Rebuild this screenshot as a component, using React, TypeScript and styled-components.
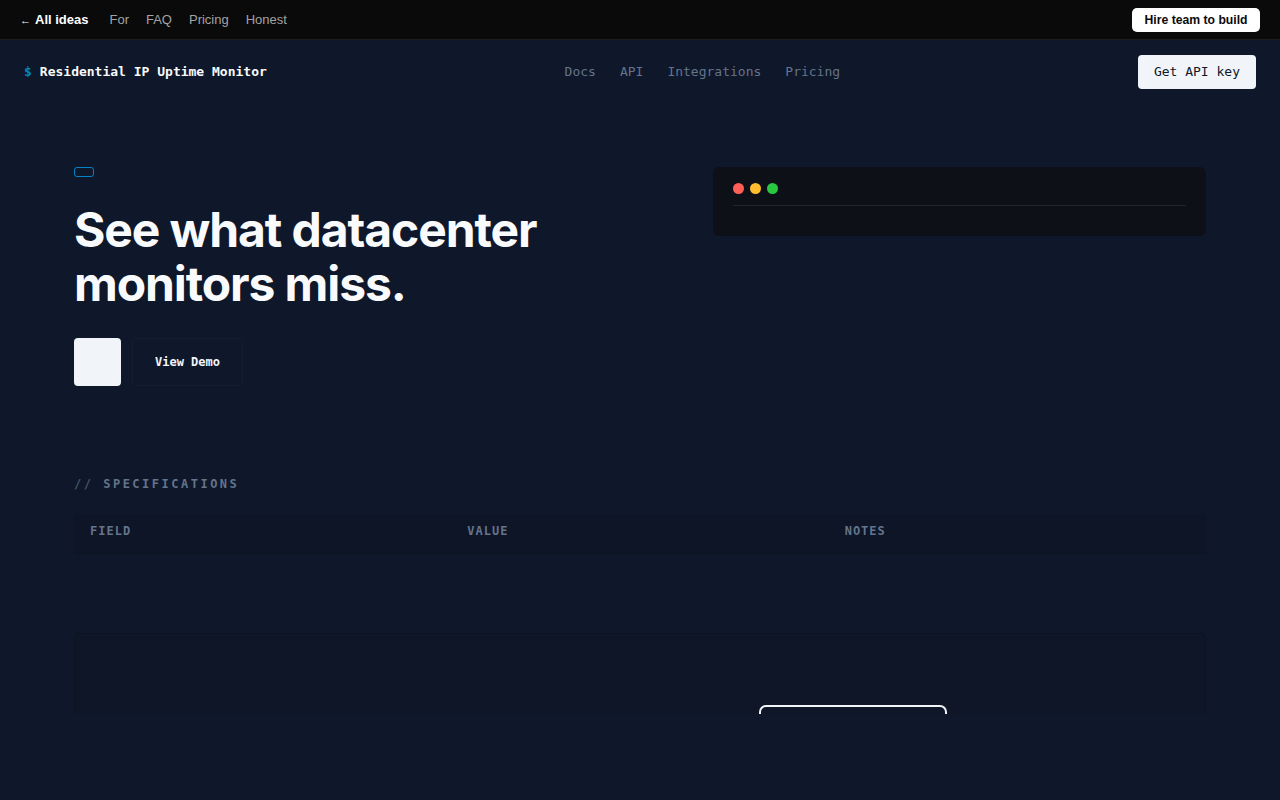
import styled, { createGlobalStyle } from 'styled-components'

const GlobalStyle = createGlobalStyle`
  html, body {
    margin: 0;
    padding: 0;
    background: #0f172a;
  }
  * {
    box-sizing: border-box;
  }
`;

const mono = `"DejaVu Sans Mono", "Liberation Mono", monospace`;

const TopBar = styled.div`
  height: 40px;
  background: #0a0a0a;
  border-bottom: 1px solid #1c1c1c;
  display: flex;
  align-items: center;
  justify-content: space-between;
  padding: 0 20px;
  font-family: "Liberation Sans", Arial, sans-serif;
  font-size: 13px;
`;
const TopLinks = styled.div`
  display: flex;
  align-items: center;
  gap: 17px;
`;
const BackLink = styled.a`
  color: #ffffff;
  font-weight: 700;
  text-decoration: none;
  margin-right: 4px;
  span {
    font-size: 11px;
    margin-right: 4px;
  }
`;
const TopLink = styled.a`
  color: #a3a3a3;
  text-decoration: none;
`;
const HireButton = styled.button`
  height: 24px;
  padding: 0 12.5px;
  border: none;
  border-radius: 5px;
  background: #ffffff;
  color: #0a0a0a;
  font-family: "Liberation Sans", Arial, sans-serif;
  font-weight: 700;
  font-size: 12.2px;
`;

const Header = styled.header`
  height: 63px;
  display: flex;
  align-items: center;
  justify-content: space-between;
  padding: 0 24px;
  font-family: ${mono};
  font-size: 13px;
`;
const Brand = styled.div`
  color: #f8fafc;
  font-weight: 700;
  span {
    color: #0284c7;
    margin-right: 8px;
  }
`;
const Nav = styled.nav`
  display: flex;
  gap: 24px;
`;
const NavLink = styled.a`
  color: #64748b;
  text-decoration: none;
`;
const KeyButton = styled.button`
  height: 34px;
  padding: 0 16px;
  border: none;
  border-radius: 4px;
  background: #f1f5f9;
  color: #0f172a;
  font-family: ${mono};
  font-size: 13px;
`;

const Container = styled.main`
  width: 1132px;
  margin: 0 auto;
`;

const Hero = styled.section`
  display: grid;
  grid-template-columns: 591px 493px;
  gap: 48px;
  padding-top: 64px;
  align-items: start;
`;
const Badge = styled.span`
  display: block;
  width: 20px;
  height: 10px;
  border: 1px solid #0284c7;
  border-radius: 3px;
`;
const Title = styled.h1`
  margin: 26px 0 0;
  font-family: Inter, "Liberation Sans", sans-serif;
  font-weight: 700;
  font-size: 48px;
  line-height: 54px;
  letter-spacing: -1.1px;
  color: #f8fafc;
  max-width: 500px;
`;
const Actions = styled.div`
  display: flex;
  gap: 11px;
  margin-top: 27px;
`;
const PrimaryButton = styled.button`
  width: 47px;
  height: 48px;
  border: none;
  border-radius: 4px;
  background: #f1f5f9;
`;
const GhostButton = styled.button`
  height: 48px;
  padding: 0 22px;
  border: 1px solid #141d31;
  border-radius: 4px;
  background: transparent;
  color: #f1f5f9;
  font-family: ${mono};
  font-weight: 700;
  font-size: 12px;
`;

const Terminal = styled.div`
  background: #0d1117;
  border-radius: 6px;
  padding: 16px 20px;
`;
const TerminalBar = styled.div`
  display: flex;
  gap: 6px;
  padding-bottom: 11px;
  border-bottom: 1px solid #21262d;
`;
const Dot = styled.span<{ $color: string }>`
  width: 11px;
  height: 11px;
  border-radius: 50%;
  background: ${p => p.$color};
`;
const TerminalBody = styled.div`
  height: 14px;
`;

const Specs = styled.section`
  margin-top: 90px;
`;
const SectionLabel = styled.h2`
  margin: 0;
  font-family: ${mono};
  font-size: 12px;
  font-weight: 700;
  letter-spacing: 2.5px;
  color: #64748b;
  line-height: 16px;
  span {
    color: #475569;
  }
`;
const TableClip = styled.div`
  margin-top: 22px;
  height: 200px;
  overflow: hidden;
`;
const TableHead = styled.div`
  display: grid;
  grid-template-columns: repeat(3, 1fr);
  height: 40px;
  padding-bottom: 6px;
  align-items: center;
  background: #0e1527;
  border-bottom: 1px solid #0c1322;
`;
const HeadCell = styled.div`
  padding: 0 16px;
  font-family: ${mono};
  font-weight: 700;
  font-size: 12px;
  letter-spacing: 1px;
  color: #64748b;
`;
const TableBody = styled.div`
  height: 79px;
`;
const Panel = styled.div`
  height: 120px;
  background: #0f1627;
  border: 1px solid #0c1322;
  border-radius: 6px;
  padding: 71px 0 0 684px;
`;
const OutlineBox = styled.div`
  width: 188px;
  height: 44px;
  border: 2px solid #f1f5f9;
  border-radius: 7px;
`;

const App = () => {
  return (
    <>
      <GlobalStyle />
      <TopBar>
        <TopLinks>
          <BackLink href="#"><span>←</span>All ideas</BackLink>
          <TopLink href="#">For</TopLink>
          <TopLink href="#">FAQ</TopLink>
          <TopLink href="#">Pricing</TopLink>
          <TopLink href="#">Honest</TopLink>
        </TopLinks>
        <HireButton>Hire team to build</HireButton>
      </TopBar>
      <Header>
        <Brand><span>$</span>Residential IP Uptime Monitor</Brand>
        <Nav>
          <NavLink href="#">Docs</NavLink>
          <NavLink href="#">API</NavLink>
          <NavLink href="#">Integrations</NavLink>
          <NavLink href="#">Pricing</NavLink>
        </Nav>
        <KeyButton>Get API key</KeyButton>
      </Header>
      <Container>
        <Hero>
          <div>
            <Badge />
            <Title>See what datacenter monitors miss.</Title>
            <Actions>
              <PrimaryButton />
              <GhostButton>View Demo</GhostButton>
            </Actions>
          </div>
          <Terminal>
            <TerminalBar>
              <Dot $color="#ff5f57" />
              <Dot $color="#febc2e" />
              <Dot $color="#28c840" />
            </TerminalBar>
            <TerminalBody />
          </Terminal>
        </Hero>
        <Specs>
          <SectionLabel><span>//</span> SPECIFICATIONS</SectionLabel>
          <TableClip>
            <TableHead>
              <HeadCell>FIELD</HeadCell>
              <HeadCell>VALUE</HeadCell>
              <HeadCell>NOTES</HeadCell>
            </TableHead>
            <TableBody />
            <Panel>
              <OutlineBox />
            </Panel>
          </TableClip>
        </Specs>
      </Container>
    </>
  );
}

export default App;
